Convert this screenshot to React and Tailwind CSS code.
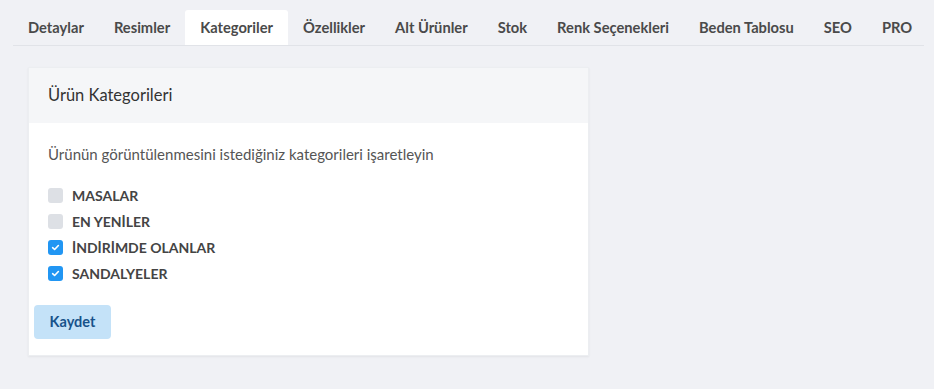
import React, { useState } from 'react';

const TABS = ['Detaylar', 'Resimler', 'Kategoriler', 'Özellikler', 'Alt Ürünler', 'Stok', 'Renk Seçenekleri', 'Beden Tablosu', 'SEO', 'PRO'];

const CATEGORIES = [
  { name: 'MASALAR', checked: false },
  { name: 'EN YENİLER', checked: false },
  { name: 'İNDİRİMDE OLANLAR', checked: true },
  { name: 'SANDALYELER', checked: true },
];

function Check({ on }) {
  return (
    <span className={`w-[15px] h-[15px] rounded-[3px] flex items-center justify-center shrink-0 ${on ? 'bg-[#2196f3]' : 'bg-[#dde0e5]'}`}>
      {on && (
        <svg width="9" height="9" viewBox="0 0 10 10" fill="none">
          <path d="M1.8 5.2 L4 7.2 L8.2 2.8" stroke="white" strokeWidth="1.8" strokeLinecap="round" strokeLinejoin="round" />
        </svg>
      )}
    </span>
  );
}

export default function App() {
  const [active] = useState('Kategoriler');
  const [cats, setCats] = useState(CATEGORIES);
  return (
    <div className="w-[934px] h-[389px] bg-[#f0f1f5] text-[#4a4a4a]" style={{ fontFamily: 'Lato, "Noto Sans", sans-serif' }}>
      <div className="pt-[10px] pl-[13px] pr-[10px]">
        <div className="flex border-b border-[#e1e3e8]">
          {TABS.map((t) => (
            <div key={t}
              className={`h-[35px] px-[15px] shrink-0 whitespace-nowrap flex items-center text-[14.7px] font-bold rounded-t-[3px] ${t === active ? 'bg-white' : ''}`}>
              {t}
            </div>
          ))}
        </div>
      </div>

      <div className="ml-[28px] mt-[21px] w-[561px] bg-white shadow-[0_1px_2px_rgba(0,0,0,0.06)] border border-[#eceef1]">
        <div className="h-[55px] bg-[#f5f6f8] px-[19px] flex items-center text-[16.5px] text-[#333]">Ürün Kategorileri</div>
        <div className="px-[19px] pt-[22px] pb-[19px]">
          <p className="text-[15px] leading-[18px] text-[#555]">Ürünün görüntülenmesini istediğiniz kategorileri işaretleyin</p>
          <div className="mt-[19px] flex flex-col">
            {cats.map((c, i) => (
              <label key={c.name} className="h-[26px] flex items-center gap-[9px] cursor-pointer"
                onClick={() => setCats((cs) => cs.map((x, j) => (j === i ? { ...x, checked: !x.checked } : x)))}>
                <Check on={c.checked} />
                <span className="text-[14px] font-bold text-[#444]">{c.name}</span>
              </label>
            ))}
          </div>
        </div>
        <div className="px-[5px] pb-[16px]">
          <button className="h-[34px] w-[77px] rounded-[4px] bg-[#c4e2f8] text-[#17528a] text-[14.5px] font-bold">Kaydet</button>
        </div>
      </div>
    </div>
  );
}
